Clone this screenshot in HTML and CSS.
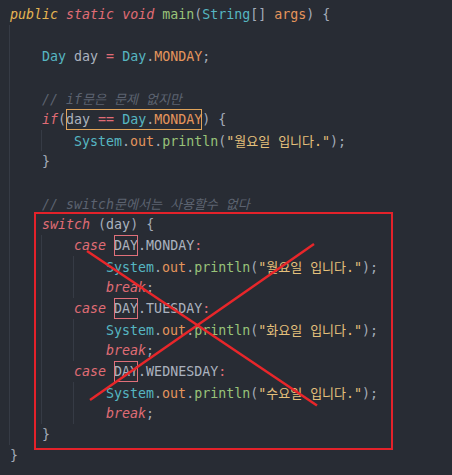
FILE: index.html
```html
<!DOCTYPE html>
<html lang="ko">
<head>
<meta charset="utf-8">
<title>switch enum</title>
<link rel="stylesheet" href="styles.css">
</head>
<body>
<div class="editor">
  <div class="code">
    <div class="line"><span class="kp">public</span> <span class="k">static</span> <span class="k">void</span> <span class="fn">main</span><span class="p">(</span><span class="ty">String</span><span class="p">[]</span> <span class="c">args</span><span class="p">)</span> <span class="p">{</span></div>
    <div class="line"><span class="ind"></span></div>
    <div class="line"><span class="ind"></span><span class="ty">Day</span> <span class="v">day</span> <span class="op">=</span> <span class="ty">Day</span><span class="p">.</span><span class="c">MONDAY</span><span class="p">;</span></div>
    <div class="line"><span class="ind"></span></div>
    <div class="line"><span class="ind"></span><span class="cm">// if<span class="ko">문은</span> <span class="ko">문제</span> <span class="ko">없지만</span></span></div>
    <div class="line"><span class="ind"></span><span class="k">if</span><span class="p">(</span><span class="hl-orange"><span class="v">day</span> <span class="op">==</span> <span class="ty">Day</span><span class="p">.</span><span class="c">MONDAY</span></span><span class="p">)</span> <span class="p">{</span></div>
    <div class="line"><span class="ind"></span><span class="ind"></span><span class="ty">System</span><span class="p">.</span><span class="c">out</span><span class="p">.</span><span class="fn">println</span><span class="p">(</span><span class="s">"<span class="ko">월요일</span> <span class="ko">입니다</span>."</span><span class="p">);</span></div>
    <div class="line"><span class="ind"></span><span class="p">}</span></div>
    <div class="line"><span class="ind"></span></div>
    <div class="line"><span class="ind"></span><span class="cm">// switch<span class="ko">문에서는</span> <span class="ko">사용할수</span> <span class="ko">없다</span></span></div>
    <div class="line"><span class="ind"></span><span class="k">switch</span> <span class="p">(</span><span class="v">day</span><span class="p">)</span> <span class="p">{</span></div>
    <div class="line"><span class="ind"></span><span class="ind"></span><span class="k">case</span> <span class="hl-red v">DAY</span><span class="v">.MONDAY</span><span class="op">:</span></div>
    <div class="line"><span class="ind"></span><span class="ind"></span><span class="ind"></span><span class="ty">System</span><span class="p">.</span><span class="c">out</span><span class="p">.</span><span class="fn">println</span><span class="p">(</span><span class="s">"<span class="ko">월요일</span> <span class="ko">입니다</span>."</span><span class="p">);</span></div>
    <div class="line"><span class="ind"></span><span class="ind"></span><span class="ind"></span><span class="k">break</span><span class="p">;</span></div>
    <div class="line"><span class="ind"></span><span class="ind"></span><span class="k">case</span> <span class="hl-red v">DAY</span><span class="v">.TUESDAY</span><span class="op">:</span></div>
    <div class="line"><span class="ind"></span><span class="ind"></span><span class="ind"></span><span class="ty">System</span><span class="p">.</span><span class="c">out</span><span class="p">.</span><span class="fn">println</span><span class="p">(</span><span class="s">"<span class="ko">화요일</span> <span class="ko">입니다</span>."</span><span class="p">);</span></div>
    <div class="line"><span class="ind"></span><span class="ind"></span><span class="ind"></span><span class="k">break</span><span class="p">;</span></div>
    <div class="line"><span class="ind"></span><span class="ind"></span><span class="k">case</span> <span class="hl-red v">DAY</span><span class="v">.WEDNESDAY</span><span class="op">:</span></div>
    <div class="line"><span class="ind"></span><span class="ind"></span><span class="ind"></span><span class="ty">System</span><span class="p">.</span><span class="c">out</span><span class="p">.</span><span class="fn">println</span><span class="p">(</span><span class="s">"<span class="ko">수요일</span> <span class="ko">입니다</span>."</span><span class="p">);</span></div>
    <div class="line"><span class="ind"></span><span class="ind"></span><span class="ind"></span><span class="k">break</span><span class="p">;</span></div>
    <div class="line"><span class="ind"></span><span class="p">}</span></div>
    <div class="line"><span class="p">}</span></div>
  </div>
  <div class="mark-box"></div>
  <svg class="mark-x" width="452" height="475" viewBox="0 0 452 475">
    <line x1="87" y1="251" x2="317" y2="405.5" />
    <line x1="314" y1="244" x2="90" y2="400" />
  </svg>
</div>
</body>
</html>
```

FILE: styles.css
```css
html, body {
  margin: 0;
  padding: 0;
  background: #282c34;
}

.editor {
  position: relative;
  width: 452px;
  height: 475px;
  overflow: hidden;
  background: #282c34;
}

.code {
  padding: 4px 0 0 10px;
  font-family: "DejaVu Sans Mono", "Noto Sans CJK KR", monospace;
  font-size: 13.3px;
  color: #abb2bf;
}

.line {
  height: 21px;
  line-height: 21px;
  white-space: pre;
}

.ind {
  display: inline-block;
  width: 4ch;
  height: 21px;
  vertical-align: top;
  box-shadow: -1px 0 0 #363b45;
}

.ko {
  font-family: "Noto Sans CJK KR", sans-serif;
  font-size: 13px;
}

.kp { color: #e5b552; font-style: italic; }
.k { color: #e06c75; font-style: italic; }
.fn { color: #98c379; }
.ty { color: #56b6c2; }
.c { color: #e5955c; }
.v { color: #abb2bf; }
.p { color: #a3abb8; }
.op { color: #e06c75; }
.s { color: #e5c07b; }
.cm { color: #5c6370; font-style: italic; }

.hl-orange {
  display: inline-block;
  height: 21px;
  vertical-align: top;
  outline: 1px solid #e0a35a;
  outline-offset: -1px;
}

.hl-red {
  display: inline-block;
  height: 21px;
  vertical-align: top;
  outline: 1px solid #e0707a;
  outline-offset: -1px;
}

.mark-box {
  position: absolute;
  left: 34px;
  top: 212px;
  width: 359px;
  height: 238px;
  box-sizing: border-box;
  border: 2px solid #e3222a;
}

.mark-x {
  position: absolute;
  left: 0;
  top: 0;
}

.mark-x line {
  stroke: #e8262a;
  stroke-width: 2.5;
}
```
